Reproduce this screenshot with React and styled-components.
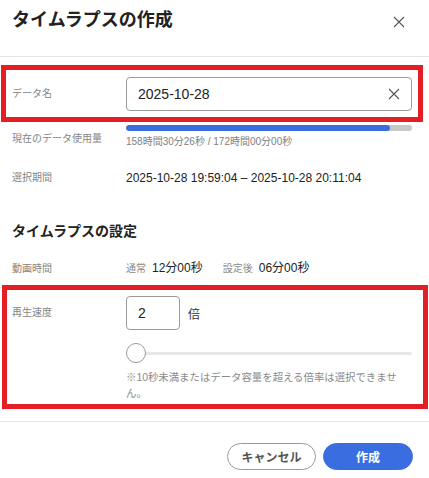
import React, { useState } from 'react'
import styled, { createGlobalStyle } from 'styled-components'

const GlobalStyle = createGlobalStyle`
    html, body {
        margin: 0;
        padding: 0;
        background: #fff;
    }
    body {
        font-family: "Liberation Sans", "Noto Sans CJK JP", sans-serif;
        color: #222;
    }
`

const Dialog = styled.div`
    position: relative;
    width: 429px;
    height: 478px;
    background: #fff;
    overflow: hidden;
`

const Header = styled.div`
    box-sizing: border-box;
    height: 57px;
    display: flex;
    justify-content: space-between;
    align-items: flex-start;
    padding: 8px 18px 0 12px;
    border-bottom: 1px solid #e6e6e6;
`

const Title = styled.h1`
    margin: 0;
    font-size: 18px;
    line-height: 24px;
    font-weight: 700;
    color: #222;
`

const IconButton = styled.button`
    width: 24px;
    height: 24px;
    margin-top: 2px;
    padding: 0;
    border: none;
    background: none;
    display: flex;
    align-items: center;
    justify-content: center;
    color: #555;
    cursor: pointer;
`

const Body = styled.div`
    padding: 0 17px 0 12px;
`

const Row = styled.div`
    display: grid;
    grid-template-columns: 114px 1fr;
    align-items: ${p => (p.$top ? 'start' : 'center')};
    margin-top: ${p => p.$mt}px;
`

const Label = styled.div`
    font-size: 10px;
    line-height: 14px;
    color: #858585;
    margin-top: ${p => p.$mt || 0}px;
`

const InputBox = styled.div`
    box-sizing: border-box;
    height: 34px;
    width: ${p => p.$width || '100%'};
    border: 1px solid #9a9a9a;
    border-radius: 4px;
    display: flex;
    align-items: center;
    padding: 0 8px 0 11px;
`

const TextInput = styled.input`
    flex: 1;
    min-width: 0;
    border: none;
    outline: none;
    padding: 0;
    font-family: inherit;
    font-size: 14px;
    color: #222;
    background: transparent;
`

const ClearButton = styled.button`
    width: 18px;
    height: 18px;
    padding: 0;
    border: none;
    background: none;
    display: flex;
    align-items: center;
    justify-content: center;
    color: #555;
`

const Track = styled.div`
    height: 6px;
    border-radius: 3px;
    background: #c8c8c8;
    overflow: hidden;
`

const Fill = styled.div`
    height: 100%;
    border-radius: 3px;
    background: #3a6ee0;
`

const SubText = styled.div`
    margin-top: 4px;
    font-size: 10px;
    line-height: 14px;
    color: #808080;
`

const Value = styled.div`
    font-size: 12px;
    line-height: 16px;
    color: #222;
    display: flex;
    align-items: baseline;
`

const Muted = styled.span`
    font-size: 10px;
    color: #8a8a8a;
    margin-right: 6px;
    margin-left: ${p => p.$ml || 0}px;
`

const SectionTitle = styled.h2`
    margin: 35px 0 0;
    font-size: 14px;
    line-height: 20px;
    font-weight: 700;
    color: #222;
`

const SpeedLine = styled.div`
    display: flex;
    align-items: center;
    gap: 8px;
    font-size: 12px;
    color: #333;
`

const SpeedInput = styled(TextInput)`
    font-size: 14px;
`

const Slider = styled.div`
    position: relative;
    margin-top: 13px;
    height: 20px;
    display: flex;
    align-items: center;
`

const SliderTrack = styled.div`
    flex: 1;
    height: 3px;
    background: #e8e8e8;
    border-radius: 2px;
`

const Thumb = styled.div`
    position: absolute;
    left: 0;
    top: 0;
    box-sizing: border-box;
    width: 20px;
    height: 20px;
    border-radius: 50%;
    border: 1px solid #9a9a9a;
    background: #fff;
`

const Note = styled.p`
    margin: 7px 0 0;
    font-size: 10.4px;
    line-height: 16px;
    color: #8a8a8a;
`

const Divider = styled.div`
    margin-top: 19px;
    height: 1px;
    background: #e6e6e6;
`

const Footer = styled.div`
    display: flex;
    justify-content: flex-end;
    gap: 7px;
    padding: 21px 16px 0 0;
`

const Button = styled.button`
    box-sizing: border-box;
    height: 27px;
    width: ${p => p.$width}px;
    border-radius: 14px;
    font-family: inherit;
    font-size: 12px;
    font-weight: 700;
    cursor: pointer;
    border: 1px solid ${p => (p.$primary ? '#3a6ee0' : '#9a9a9a')};
    background: ${p => (p.$primary ? '#3a6ee0' : '#fff')};
    color: ${p => (p.$primary ? '#fff' : '#555')};
`

const Highlight = styled.div`
    position: absolute;
    box-sizing: border-box;
    border: 5px solid #e41e25;
    pointer-events: none;
`

const XIcon = ({ size }) => (
    <svg width={size} height={size} viewBox="0 0 12 12" fill="none" stroke="currentColor" strokeWidth="1.1">
        <path d="M1 1L11 11M11 1L1 11" />
    </svg>
)

function App() {
    const [name, setName] = useState('2025-10-28')
    const [speed, setSpeed] = useState('2')
    const used = 158 * 3600 + 30 * 60 + 26
    const total = 172 * 3600
    const pct = (used / total) * 100

    return (
        <Dialog>
            <GlobalStyle />
            <Header>
                <Title>タイムラプスの作成</Title>
                <IconButton aria-label="閉じる"><XIcon size={12} /></IconButton>
            </Header>
            <Body>
                <Row $mt={20}>
                    <Label>データ名</Label>
                    <InputBox>
                        <TextInput value={name} onChange={e => setName(e.target.value)} />
                        <ClearButton onClick={() => setName('')}><XIcon size={12} /></ClearButton>
                    </InputBox>
                </Row>
                <Row $mt={14} $top>
                    <Label $mt={7}>現在のデータ使用量</Label>
                    <div>
                        <Track><Fill style={{ width: `${pct}%` }} /></Track>
                        <SubText>158時間30分26秒 / 172時間00分00秒</SubText>
                    </div>
                </Row>
                <Row $mt={21}>
                    <Label>選択期間</Label>
                    <Value>2025-10-28 19:59:04 – 2025-10-28 20:11:04</Value>
                </Row>
                <SectionTitle>タイムラプスの設定</SectionTitle>
                <Row $mt={19}>
                    <Label>動画時間</Label>
                    <Value>
                        <Muted>通常</Muted>12分00秒
                        <Muted $ml={20}>設定後</Muted>06分00秒
                    </Value>
                </Row>
                <Row $mt={19} $top>
                    <Label $mt={10}>再生速度</Label>
                    <div>
                        <SpeedLine>
                            <InputBox $width="54px">
                                <SpeedInput value={speed} onChange={e => setSpeed(e.target.value)} />
                            </InputBox>
                            倍
                        </SpeedLine>
                        <Slider>
                            <SliderTrack />
                            <Thumb />
                        </Slider>
                        <Note>※10秒未満またはデータ容量を超える倍率は選択できません。</Note>
                    </div>
                </Row>
            </Body>
            <Divider />
            <Footer>
                <Button $width={89}>キャンセル</Button>
                <Button $width={90} $primary>作成</Button>
            </Footer>
            <Highlight style={{ left: 1, top: 65, width: 422, height: 57 }} />
            <Highlight style={{ left: 2, top: 285, width: 426, height: 124 }} />
        </Dialog>
    )
}

export default App
